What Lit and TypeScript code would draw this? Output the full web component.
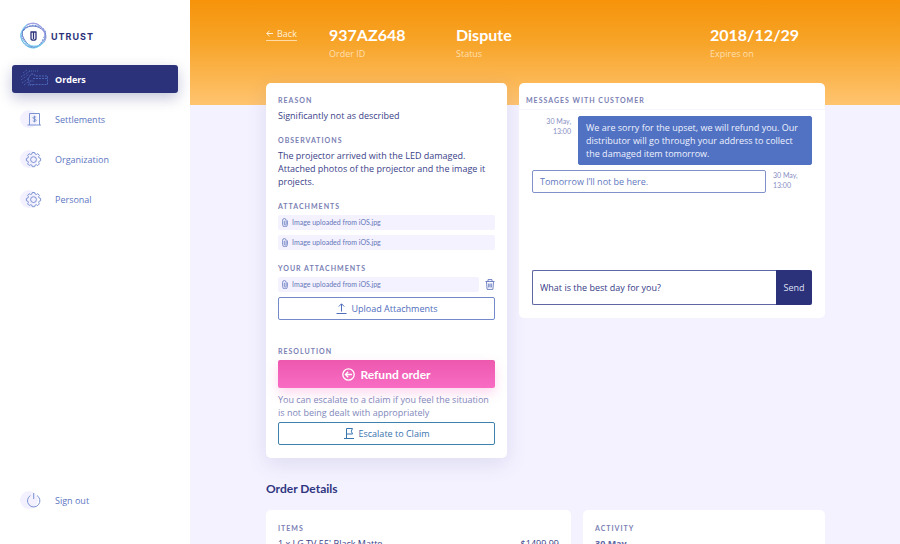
import { LitElement, html, css, svg } from "lit";
import { customElement, property } from "lit/decorators.js";
import { classMap } from "lit/directives/class-map.js";

const navIcons: Record<string, unknown> = {
  orders: svg`
    <g class="grain">
      <path d="M3 7l4-3M1 11l9-6M1 14l8-6M2 17l6-4M4 19l4-3M9 5h9M8 19h6"/>
    </g>
    <path d="M8 13l3-5h3l1 2h12.500v8.500H9.500z" stroke-dasharray="2 1"/>
    <path d="M13 12.500h14M9.500 15h4" stroke-dasharray="2 1"/>`,
  settlements: svg`
    <path d="M9.500 19V7.500h10V19M7.500 19h13.500"/>
    <path d="M16 11.500c-.4-.6-.9-.8-1.500-.8-.9 0-1.500.4-1.500 1.100 0 1.600 3.100.8 3.100 2.500 0 .7-.7 1.100-1.600 1.100-.7 0-1.300-.2-1.700-.8M14.500 9.800v6.500"/>`,
  gear: svg`
    <path d="M12.300 6.500h2.400l.4 1.500 1.300.5 1.400-.8 1.600 1.600-.8 1.400.5 1.300 1.500.4v2.400l-1.500.4-.5 1.300.8 1.400-1.600 1.600-1.400-.8-1.300.5-.4 1.500h-2.400l-.4-1.500-1.300-.5-1.400.8-1.600-1.600.8-1.400-.5-1.300-1.500-.4v-2.400l1.500-.4.5-1.300-.8-1.400 1.600-1.600 1.400.8 1.300-.5z"/>
    <circle cx="13.500" cy="13.600" r="2.900"/>`,
  power: svg`<path d="M10.400 8.500a6.200 6.200 0 1 0 6.600 0M13.700 6v6"/>`,
};

const clip = svg`<svg class="clip" viewBox="0 0 6 9" width="6" height="9" aria-hidden="true">
  <path d="M5.400 2.500v4a2.300 2.300 0 0 1-4.800 0V2.300a1.700 1.700 0 0 1 3.500 0v4a.9.9 0 0 1-1.800 0V2.800"/></svg>`;

@customElement("nav-item")
class NavItem extends LitElement {
  @property() icon = "";
  @property() label = "";
  @property({ type: Boolean }) active = false;

  static styles = css`
    :host { display: block; }
    .item {
      display: flex; align-items: center; gap: 7px; height: 28px; padding-left: 8px;
      border-radius: 3px; color: #5b75c2; font-size: 9px; text-decoration: none;
    }
    .item.active {
      background: #2c327a; color: #fff; font-weight: 700;
      box-shadow: 0 5px 14px rgba(44, 50, 122, 0.28);
    }
    .icon { fill: none; stroke: #7c93d2; stroke-width: 1; }
    .blob { fill: #f3f1ff; stroke: none; }
    .active .blob { fill: none; }
    .active .icon { stroke: #4b66b8; }
    .grain { stroke-dasharray: 1 1; }
  `;

  render() {
    return html`<a href="#" class=${classMap({ item: true, active: this.active })}>
      <svg class="icon" viewBox="0 0 28 26" width="28" height="26" aria-hidden="true">
        <circle class="blob" cx="9" cy="13" r="9" />
        ${navIcons[this.icon]}
      </svg>
      ${this.label}
    </a>`;
  }
}

@customElement("file-chip")
class FileChip extends LitElement {
  @property() name = "";

  static styles = css`
    :host { display: block; flex: 1; }
    .chip {
      display: flex; align-items: center; gap: 4px; height: 15px; padding-left: 4px;
      background: #f4f2ff; border-radius: 2px; color: #6577b8; text-decoration: none;
      font-family: Lato, sans-serif; font-size: 7px;
    }
    .clip { fill: none; stroke: #5f76bd; stroke-width: 0.8; }
  `;

  render() {
    return html`<a class="chip" href="#">${clip}${this.name}</a>`;
  }
}

@customElement("app-root")
class AppRoot extends LitElement {
  static styles = css`
    :host {
      display: grid; grid-template-columns: 190px 1fr; height: 100vh;
      font-family: "Open Sans", Lato, sans-serif; font-size: 9px; line-height: 13px; color: #3b4289;
    }
    * { box-sizing: border-box; }
    h1, h2, h3, p, dl, dd, dt, ul { margin: 0; padding: 0; }
    button, input { font: inherit; }
    svg { flex: none; }

    .sidebar {
      display: flex; flex-direction: column; padding: 22px 12px 30px; background: #fff;
    }
    .logo { display: flex; align-items: center; gap: 3px; height: 28px; padding-left: 7px; margin-bottom: 15px; }
    .wordmark { padding-top: 2px; font: 700 9px/14px Inter, sans-serif; letter-spacing: 1px; color: #2c327a; }
    .nav { display: flex; flex-direction: column; gap: 12px; flex: 1; }

    .page {
      overflow-y: auto; scrollbar-width: none; padding: 0 75px 24px 76px;
      background: linear-gradient(#f6930a, #f7a428 40%, #ffc470) 0 0 / 100% 105px no-repeat #f4f2ff;
    }
    .summary {
      display: grid; grid-template-columns: 63fr 127fr 254fr 115fr; height: 83px; padding-top: 24px;
      color: #fff;
    }
    .back {
      justify-self: start; align-self: start; display: flex; align-items: center; gap: 4px; height: 17px;
      padding-top: 3px; color: #ffefd6; border-bottom: 1px solid #ffdca6; font-size: 9px; text-decoration: none;
    }
    .back svg { fill: none; stroke: #ffefd6; }
    .fact { display: flex; flex-direction: column; }
    .fact dd { font-family: Lato, sans-serif; font-size: 16px; line-height: 22px; font-weight: 700; }
    .fact dt { order: 1; font-size: 9px; line-height: 16px; color: #ffdfae; }

    .cols { display: grid; gap: 12px; align-items: start; }
    .dispute { grid-template-columns: 241fr 306fr; }
    .details { grid-template-columns: 305fr 242fr; }
    .card { background: #fff; border-radius: 5px; padding: 11px 12px 13px; }
    .details .card { padding-top: 12px; }
    .raised { box-shadow: 0 6px 20px rgba(70, 75, 150, 0.13); }
    .section { margin-bottom: 12px; }
    .section.wide { margin-bottom: 25px; }
    .section:last-child { margin-bottom: 0; }
    .cap {
      margin-bottom: 3px; font-family: Lato, sans-serif; font-size: 7px; line-height: 12px;
      font-weight: 700; letter-spacing: 1px; color: #7a80b4; text-transform: uppercase;
    }
    .files { display: flex; flex-direction: column; gap: 5px; }
    .own { display: flex; align-items: center; gap: 6px; height: 15px; margin-bottom: 5px; }
    .trash { display: flex; padding: 0; border: 0; background: none; }
    .trash svg { fill: none; stroke: #7083c4; }

    .btn {
      display: flex; align-items: center; justify-content: center; gap: 5px; width: 100%; height: 23px;
      padding: 0; border: 1px solid #7389ca; border-radius: 2px; background: #fff; color: #4f6dbd;
      font-size: 9px;
    }
    .btn svg { fill: none; stroke: currentColor; }
    .claim { border-color: #3d82ac; color: #3974ae; }
    .refund {
      height: 28px; border: 0; background: linear-gradient(#ec58ae, #f96cc4); color: #fff;
      font-family: Lato, sans-serif; font-size: 12px; font-weight: 700;
      box-shadow: 0 5px 12px rgba(248, 100, 190, 0.25);
    }
    .hint { margin: 5px 0 3px; color: #8188bb; }

    .chat { display: flex; flex-direction: column; min-height: 235px; padding: 11px 0 13px; }
    .chat .cap { margin: 0; padding: 0 7px 3px; border-bottom: 1px solid #f7f6fc; }
    .log { display: flex; flex-direction: column; gap: 5px; flex: 1; padding: 6px 13px; }
    .msg { display: flex; gap: 7px; }
    .msg.mine { flex-direction: row-reverse; }
    .bubble { flex: 1; padding: 4px 7px; border: 1px solid #8090cb; border-radius: 2px; color: #5f78c0; }
    .mine .bubble { border-color: #5171c2; background: #5171c2; color: #eef1ff; }
    .time { width: 39px; font-family: Lato, sans-serif; font-size: 7px; line-height: 10px; color: #888ebf; }
    .mine .time { text-align: right; }
    .composer { display: flex; height: 35px; margin: 0 13px; }
    .draft {
      flex: 1; min-width: 0; padding: 0 7px; border: 1px solid #5f66a4; border-right: 0;
      border-radius: 2px 0 0 2px; background: #fff; color: #343b86; outline: 0;
    }
    .send { width: 36px; padding: 0; border: 0; border-radius: 0 2px 2px 0; background: #2c327a; color: #dfe1f5; }

    .title {
      margin: 21px 0 11px; font-family: Lato, sans-serif; font-size: 12px; line-height: 20px;
      font-weight: 700; color: #2f367f;
    }
    .line { display: flex; justify-content: space-between; }
    .day { font-weight: 700; color: #5f66a4; }
  `;

  render() {
    return html`
      <aside class="sidebar">
        <div class="logo">
          <svg viewBox="0 0 29 28" width="29" height="28" fill="none" aria-hidden="true">
            <g stroke-width="1">
              <path stroke="#8fa3de" d="M4 8C7 2 13 0 18 2s9 8 9 13-5 9-11 10S5 23 3 18s-1-7 1-10z" />
              <path stroke="#5f74c4" d="M6 6c4-2 10-3 15 0s6 6 5 10-6 8-10 9S6 20 4 15s0-8 2-9z" />
              <path stroke="#5d86d8" stroke-dasharray="2 1" d="M5 8c4-4 8-6 14-4s9 5 7 9-3 9-9 12S6 21 4 17s-1-7 1-9z" />
              <path stroke="#65c9ee" d="M2 13C1 18 6 24 11 25.500s9-.5 13-4.500" />
              <path stroke="#7fd6f2" d="M1.500 14C2 8 6 3 9 2M4 18c3 4 7 6 12 6s8-2 9-5" />
              <path stroke="#a39be2" d="M8 3c4-3 11-2 14 2s4 7 4 9" />
            </g>
            <path stroke="#2c327a" stroke-width="1.300" d="M11.500 10h6M12 10v6.500q0 1.700 2.500 1.700t2.500-1.700V10M14.500 10v7" />
          </svg>
          <span class="wordmark">UTRUST</span>
        </div>
        <nav class="nav">
          <nav-item icon="orders" label="Orders" active></nav-item>
          <nav-item icon="settlements" label="Settlements"></nav-item>
          <nav-item icon="gear" label="Organization"></nav-item>
          <nav-item icon="gear" label="Personal"></nav-item>
        </nav>
        <nav-item icon="power" label="Sign out"></nav-item>
      </aside>

      <main class="page">
        <dl class="summary">
          <a class="back" href="#">
            <svg viewBox="0 0 7 7" width="7" height="7" aria-hidden="true"><path d="M7 3.500H.8M3.500.8L.8 3.500l2.700 2.700" /></svg>
            Back
          </a>
          <div class="fact"><dt>Order ID</dt><dd>937AZ648</dd></div>
          <div class="fact"><dt>Status</dt><dd>Dispute</dd></div>
          <div class="fact"><dt>Expires on</dt><dd>2018/12/29</dd></div>
        </dl>

        <div class="cols dispute">
          <article class="card raised">
            <section class="section">
              <h3 class="cap">Reason</h3>
              <p>Significantly not as described</p>
            </section>
            <section class="section">
              <h3 class="cap">Observations</h3>
              <p>The projector arrived with the LED damaged. Attached photos of the projector and the image it projects.</p>
            </section>
            <section class="section">
              <h3 class="cap">Attachments</h3>
              <div class="files">
                <file-chip name="Image uploaded from iOS.jpg"></file-chip>
                <file-chip name="Image uploaded from iOS.jpg"></file-chip>
              </div>
            </section>
            <section class="section wide">
              <h3 class="cap">Your attachments</h3>
              <div class="own">
                <file-chip name="Image uploaded from iOS.jpg"></file-chip>
                <button class="trash" aria-label="Delete attachment">
                  <svg viewBox="0 0 10 11" width="10" height="11" aria-hidden="true">
                    <path d="M.5 2.500h9M3 2.300V.6h4v1.700M1.500 2.500l.6 7.900h5.800l.6-7.900M3.700 4.500v4M5 4.500v4M6.300 4.500v4" />
                  </svg>
                </button>
              </div>
              <button class="btn">
                <svg viewBox="0 0 11 11" width="11" height="11" aria-hidden="true"><path d="M.5 10.500h10M5.500 8.500V1M2.800 3.500L5.500.8l2.700 2.700" /></svg>
                Upload Attachments
              </button>
            </section>
            <section class="section">
              <h3 class="cap">Resolution</h3>
              <button class="btn refund">
                <svg viewBox="0 0 13 13" width="13" height="13" stroke-width="1.300" aria-hidden="true">
                  <circle cx="6.500" cy="6.500" r="5.700" /><path d="M10 6.500H3.500M6.200 3.700L3.400 6.500l2.800 2.800" />
                </svg>
                Refund order
              </button>
              <p class="hint">You can escalate to a claim if you feel the situation is not being dealt with appropriately</p>
              <button class="btn claim">
                <svg viewBox="0 0 10 11" width="10" height="11" aria-hidden="true"><path d="M0 10.500h10M2.500 10.500V.5h6L7.300 3.200l1.200 2.800h-6" /></svg>
                Escalate to Claim
              </button>
            </section>
          </article>

          <section class="card chat">
            <h3 class="cap">Messages with customer</h3>
            <div class="log">
              <div class="msg mine">
                <p class="bubble">We are sorry for the upset, we will refund you. Our distributor will go through your address to collect the damaged item tomorrow.</p>
                <time class="time">30 May,<br />13:00</time>
              </div>
              <div class="msg">
                <p class="bubble">Tomorrow I’ll not be here.</p>
                <time class="time">30 May,<br />13:00</time>
              </div>
            </div>
            <form class="composer" @submit=${(e: Event) => e.preventDefault()}>
              <input class="draft" type="text" aria-label="Message" value="What is the best day for you?" />
              <button class="send">Send</button>
            </form>
          </section>
        </div>

        <h2 class="title">Order Details</h2>
        <div class="cols details">
          <section class="card">
            <h3 class="cap">Items</h3>
            <p class="line"><span>1 x LG TV 55' Black Matte</span><span>$1499.99</span></p>
          </section>
          <section class="card">
            <h3 class="cap">Activity</h3>
            <p class="day">30 May</p>
          </section>
        </div>
      </main>
    `;
  }
}
